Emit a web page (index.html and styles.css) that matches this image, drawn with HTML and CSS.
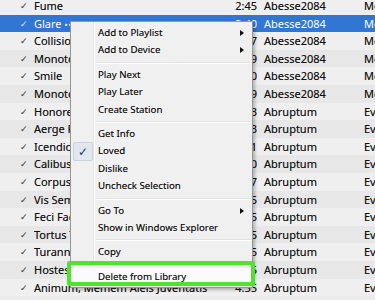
FILE: index.html
```html
<!DOCTYPE html>
<html lang="en">
<head>
    <meta charset="UTF-8">
    <meta name="viewport" content="width=device-width, initial-scale=1.0">
    <title>Library - Context Menu</title>
    <link rel="stylesheet" href="styles.css">
</head>
<body>
    <div id="library">
        <div class="row"><span class="chk">&#10003;</span><span class="title">Fume</span><span class="time">2:45</span><span class="artist">Abesse2084</span><span class="album">Monochrome</span></div>
        <div class="row selected"><span class="chk">&#10003;</span><span class="title">Glare <span class="dots">&bull;&bull;</span></span><span class="time">3:40</span><span class="artist">Abesse2084</span><span class="album">Monochrome</span></div>
        <div class="row"><span class="chk">&#10003;</span><span class="title">Collision Course</span><span class="time">4:17</span><span class="artist">Abesse2084</span><span class="album">Monochrome</span></div>
        <div class="row"><span class="chk">&#10003;</span><span class="title">Monotonous</span><span class="time">3:29</span><span class="artist">Abesse2084</span><span class="album">Monochrome</span></div>
        <div class="row"><span class="chk">&#10003;</span><span class="title">Smile</span><span class="time">3:50</span><span class="artist">Abesse2084</span><span class="album">Monochrome</span></div>
        <div class="row"><span class="chk">&#10003;</span><span class="title">Monotonous II</span><span class="time">4:09</span><span class="artist">Abesse2084</span><span class="album">Monochrome</span></div>
        <div class="row"><span class="chk">&#10003;</span><span class="title">Honores Mortis</span><span class="time">5:13</span><span class="artist">Abruptum</span><span class="album">Evil Genius</span></div>
        <div class="row"><span class="chk">&#10003;</span><span class="title">Aerge Fatalis</span><span class="time">4:33</span><span class="artist">Abruptum</span><span class="album">Evil Genius</span></div>
        <div class="row"><span class="chk">&#10003;</span><span class="title">Icendio Infernus</span><span class="time">3:21</span><span class="artist">Abruptum</span><span class="album">Evil Genius</span></div>
        <div class="row"><span class="chk">&#10003;</span><span class="title">Calibus Ignis</span><span class="time">4:40</span><span class="artist">Abruptum</span><span class="album">Evil Genius</span></div>
        <div class="row"><span class="chk">&#10003;</span><span class="title">Corpus in Ruina</span><span class="time">3:57</span><span class="artist">Abruptum</span><span class="album">Evil Genius</span></div>
        <div class="row"><span class="chk">&#10003;</span><span class="title">Vis Semper</span><span class="time">4:25</span><span class="artist">Abruptum</span><span class="album">Evil Genius</span></div>
        <div class="row"><span class="chk">&#10003;</span><span class="title">Feci Factum</span><span class="time">3:15</span><span class="artist">Abruptum</span><span class="album">Evil Genius</span></div>
        <div class="row"><span class="chk">&#10003;</span><span class="title">Tortus Terror</span><span class="time">4:05</span><span class="artist">Abruptum</span><span class="album">Evil Genius</span></div>
        <div class="row"><span class="chk">&#10003;</span><span class="title">Turannus Rex</span><span class="time">3:45</span><span class="artist">Abruptum</span><span class="album">Evil Genius</span></div>
        <div class="row"><span class="chk">&#10003;</span><span class="title">Hostes Contra</span><span class="time">4:35</span><span class="artist">Abruptum</span><span class="album">Evil Genius</span></div>
        <div class="row"><span class="chk">&#10003;</span><span class="title">Animum, Memem Aleis Juventatis</span><span class="time">4:55</span><span class="artist">Abruptum</span><span class="album">Evil Genius</span></div>
    </div>

    <!-- Context menu over the list -->
    <div id="contextMenu">
        <div class="item">Add to Playlist<span class="arrow"></span></div>
        <div class="item">Add to Device<span class="arrow"></span></div>
        <div class="sep"></div>
        <div class="item">Play Next</div>
        <div class="item">Play Later</div>
        <div class="item">Create Station</div>
        <div class="sep"></div>
        <div class="item">Get Info</div>
        <div class="item checked"><span class="tick">&#10003;</span>Loved</div>
        <div class="item">Dislike</div>
        <div class="item">Uncheck Selection</div>
        <div class="sep"></div>
        <div class="item">Go To<span class="arrow"></span></div>
        <div class="item">Show in Windows Explorer</div>
        <div class="sep"></div>
        <div class="item">Copy</div>
        <div class="sep"></div>
        <div class="item hover">Delete from Library</div>
    </div>

    <!-- Green highlight box -->
    <div id="highlight"></div>
</body>
</html>
```

FILE: styles.css
```css
body {
    margin: 0;
    width: 375px;
    height: 300px;
    overflow: hidden;
    background-color: #ebebeb;
    font-family: "Noto Sans", "Open Sans", sans-serif;
    font-size: 11px;
    color: #111;
    text-shadow: 0 0 0.6px rgba(0, 0, 0, 0.45);
}
#library {
    margin-top: -3px;
}
.row {
    display: grid;
    grid-template-columns: 34px 188px 35px 100px 1fr;
    height: 17.6px;
    line-height: 17.6px;
    white-space: nowrap;
    background-color: #efefef;
}
.row:nth-child(even) {
    background-color: #e7e7e7;
}
.row.selected {
    background-color: #3176d3;
    color: #fff;
    text-shadow: none;
}
.row span {
    overflow: hidden;
}
.chk {
    padding-left: 20px;
    font-size: 9px;
    color: #555;
}
.row.selected .chk {
    color: #dfe9f7;
}
.dots {
    font-size: 8px;
    letter-spacing: 1px;
}
.time {
    text-align: right;
}
.artist {
    padding-left: 7px;
}
.album {
    padding-left: 7px;
}
/* Context menu */
#contextMenu {
    position: absolute;
    left: 70px;
    top: 21px;
    width: 181px;
    padding: 2px 0;
    font-size: 9.7px;
    background-color: #f0f0f0;
    border: 1px solid #979797;
    box-shadow: 2px 2px 3px rgba(0, 0, 0, 0.25);
    background-image: linear-gradient(to right, transparent 22px, #e2e3e3 22px, #e2e3e3 23px, #ffffff 23px, #ffffff 24px, transparent 24px);
}
.item {
    position: relative;
    height: 17.4px;
    line-height: 17.4px;
    padding-left: 27px;
    white-space: nowrap;
    color: #0d0d0d;
}
.sep {
    height: 7px;
    margin-left: 25px;
    margin-right: 1px;
    background-image: linear-gradient(to bottom, transparent 3px, #e0e0e0 3px, #e0e0e0 4px, #fff 4px, #fff 5px, transparent 5px);
}
.arrow {
    position: absolute;
    right: 8px;
    top: 6px;
    width: 0;
    height: 0;
    border-top: 3px solid transparent;
    border-bottom: 3px solid transparent;
    border-left: 4px solid #111;
}
.tick {
    position: absolute;
    left: 2px;
    top: 0;
    width: 18px;
    height: 17px;
    line-height: 17px;
    text-align: center;
    background-color: #e2e7ef;
    border: 1px solid #c9d3e0;
    border-radius: 2px;
    color: #1b3d78;
    font-size: 12px;
    text-shadow: none;
}
.item.hover {
    background-color: #fbfbfb;
}
#highlight {
    position: absolute;
    left: 67px;
    top: 261px;
    width: 180px;
    height: 17px;
    border: 4px solid #4fe32f;
    border-radius: 2px;
}
```
